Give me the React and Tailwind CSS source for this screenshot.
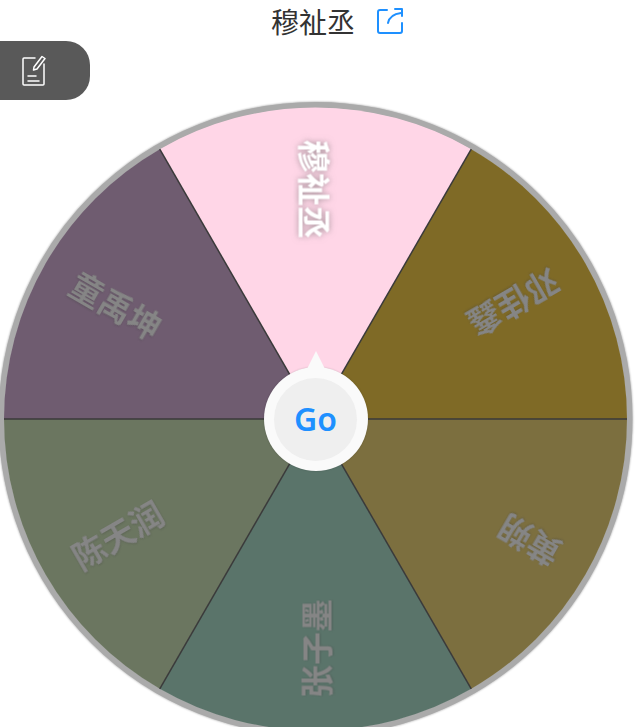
const CX = 315.5;
const CY = 319;
const R = 311.5;

const lightText = "fill-white drop-shadow-[0_0_3px_rgba(90,90,90,0.55)]";
const greyText = "fill-[#858585] drop-shadow-[0_1px_1px_rgba(60,60,60,0.3)]";

const slices = [
  { name: "穆祉丞", angle: 0, fill: "#ffd6e7", text: lightText },
  { name: "邓佳鑫", angle: 60, fill: "#7f6a26", text: greyText },
  { name: "黄朔", angle: 120, fill: "#7c6f3f", text: greyText },
  { name: "张子墨", angle: 180, fill: "#5a746a", text: greyText },
  { name: "陈天润", angle: 240, fill: "#6b7660", text: greyText },
  { name: "童禹坤", angle: 300, fill: "#6f5c70", text: greyText },
];

function point(deg, r) {
  const a = ((deg - 90) * Math.PI) / 180;
  return [CX + r * Math.cos(a), CY + r * Math.sin(a)];
}

function slicePath(angle) {
  const [x1, y1] = point(angle - 30, R);
  const [x2, y2] = point(angle + 30, R);
  return `M${CX} ${CY} L${x1} ${y1} A${R} ${R} 0 0 1 ${x2} ${y2} Z`;
}

function Wheel() {
  return (
    <svg width="640" height="640" viewBox="0 0 640 640" className="block">
      <circle cx={CX} cy={CY} r={R + 2.5} fill="none" stroke="#aaaaaa" strokeWidth="6" className="drop-shadow-[0_0_1px_rgba(0,0,0,0.4)]" />
      {slices.map((s) => (
        <path key={s.name} d={slicePath(s.angle)} fill={s.fill} />
      ))}
      {slices.map((s) => {
        const [x1, y1] = point(s.angle - 30, R);
        return <line key={s.angle} x1={CX} y1={CY} x2={x1} y2={y1} stroke="#3a3a3a" strokeWidth="1.5" />;
      })}
      {slices.map((s) => {
        const [x, y] = point(s.angle, 279);
        return (
          <text
            key={s.name}
            x={x}
            y={y}
            textAnchor="start"
            dominantBaseline="central"
            transform={`rotate(${s.angle + 90} ${x} ${y})`}
            className={`text-[33px] font-semibold ${s.text}`}
            style={{ fontFamily: '"Noto Sans CJK SC", sans-serif' }}
          >
            {s.name}
          </text>
        );
      })}
    </svg>
  );
}

function ShareIcon() {
  return (
    <svg width="26" height="26" viewBox="0 0 26 26" fill="none" stroke="#1e90ff" strokeWidth="2" strokeLinecap="round" strokeLinejoin="round">
      <path d="M10 2H3a2 2 0 0 0-2 2v19a2 2 0 0 0 2 2h20a2 2 0 0 0 2-2v-8" />
      <path d="M11 15c1-5 5-9 13-10" />
      <path d="M18 1h7v7" />
    </svg>
  );
}

function NoteIcon() {
  return (
    <svg width="24" height="31" viewBox="0 0 24 31" fill="none" stroke="#ffffff" strokeWidth="1.5" strokeLinecap="round" strokeLinejoin="round">
      <path d="M13 3H2a1 1 0 0 0-1 1v25a1 1 0 0 0 1 1h19a1 1 0 0 0 1-1V9" />
      <path d="M12 12 20 1.5l3 2L15 14l-3.5 1z" />
      <path d="M6 21h8" />
      <path d="M6 26h11" />
    </svg>
  );
}

export default function App() {
  return (
    <div className="h-[727px] w-[640px] overflow-hidden bg-white">
      <div className="flex h-[41px] items-center justify-center gap-[22px] pl-[34px]">
        <span className="text-[28px] font-normal leading-none text-[#333]" style={{ fontFamily: '"Noto Sans CJK SC", sans-serif' }}>
          穆祉丞
        </span>
        <ShareIcon />
      </div>
      <div className="flex h-[59px] w-[90px] items-center rounded-r-[24px] bg-[#595959] pl-[22px]">
        <NoteIcon />
      </div>
      <div className="relative">
        <Wheel />
        <div className="absolute left-[263.5px] top-[251px] flex h-[120px] w-[104px] items-end">
          <div className="absolute left-[41px] top-0 h-0 w-0 border-x-[11px] border-b-[22px] border-x-transparent border-b-[#fafafa]" />
          <div className="flex h-[104px] w-[104px] items-center justify-center rounded-full bg-[#fafafa] shadow-[0_0_2px_rgba(0,0,0,0.2)]">
            <div className="flex h-[83px] w-[83px] items-center justify-center rounded-full bg-[#efefef]">
              <span className="text-[32px] font-semibold text-[#1e90ff]" style={{ fontFamily: '"Noto Sans", sans-serif' }}>
                Go
              </span>
            </div>
          </div>
        </div>
      </div>
    </div>
  );
}
